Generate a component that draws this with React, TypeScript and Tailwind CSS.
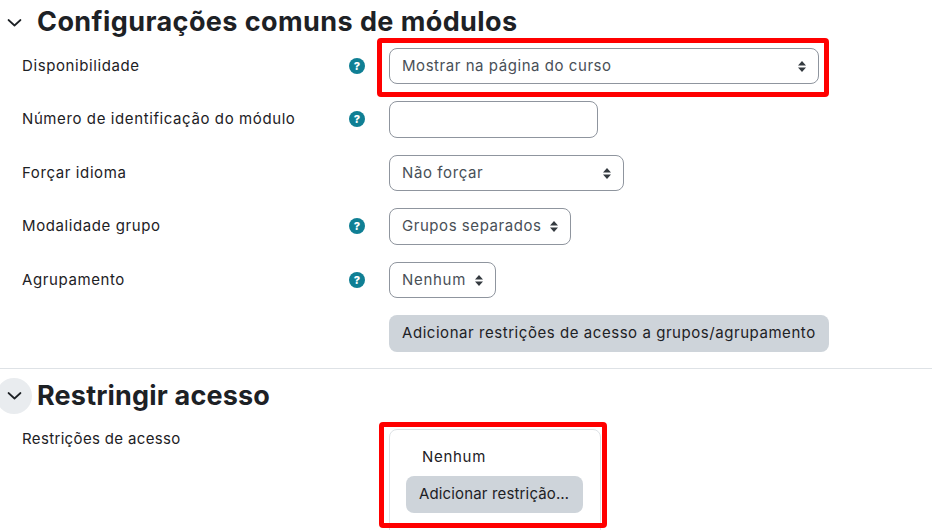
const FONT = "font-['Inter','Liberation_Sans',sans-serif]";

function Chevron() {
  return (
    <svg width="15" height="15" viewBox="0 0 15 15" fill="none" stroke="#1d2125" strokeWidth="1.7" strokeLinecap="round" strokeLinejoin="round">
      <path d="M1.5 5 L7.5 10.5 L13.5 5" />
    </svg>
  );
}

function Help() {
  return (
    <span className="flex h-4 w-4 items-center justify-center rounded-full bg-[#0f7f94] text-[11px] font-extrabold leading-none tracking-normal text-white">
      ?
    </span>
  );
}

function Caret() {
  return (
    <svg width="8" height="11" viewBox="0 0 8 11" fill="#343a40">
      <path d="M4 0 L8 4.4 H0 Z M0 6.6 H8 L4 11 Z" />
    </svg>
  );
}

function Select({ text, className }: { text: string; className: string }) {
  return (
    <div className={`flex items-center justify-between rounded-lg border border-[#8f959e] bg-white pl-3 pr-[12px] text-[#495057] ${className}`}>
      <span className="whitespace-nowrap">{text}</span>
      <Caret />
    </div>
  );
}

function Row({ label, help, className, children }: { label?: string; help?: boolean; className: string; children?: React.ReactNode }) {
  return (
    <div className={`flex ${className}`}>
      <div className="w-[349px] pt-[7px] pl-[22px] text-[#1d2125]">{label}</div>
      <div className="w-[40px] pt-[10px]">{help && <Help />}</div>
      <div>{children}</div>
    </div>
  );
}

export default function App() {
  return (
    <div className={`relative h-[530px] w-[932px] overflow-hidden bg-white text-[15px] tracking-[0.6px] ${FONT}`}>
      <div className="flex h-[48px] items-start pt-[4px]">
        <div className="flex h-[36px] w-[37px] items-center justify-center pr-[9px] pt-[1px]"><Chevron /></div>
        <h3 className="text-[27px] font-bold leading-[36px] tracking-[0.42px] text-[#1d2125]">Configurações comuns de módulos</h3>
      </div>

      <Row label="Disponibilidade" help className="h-[53px]">
        <Select text="Mostrar na página do curso" className="h-[36px] w-[430px] tracking-[0.55px]" />
      </Row>
      <Row label="Número de identificação do módulo" help className="h-[54px]">
        <div className="h-[37px] w-[209px] rounded-lg border border-[#8f959e] bg-white" />
      </Row>
      <Row label="Forçar idioma" className="h-[53px]">
        <Select text="Não forçar" className="h-[36px] w-[235px]" />
      </Row>
      <Row label="Modalidade grupo" help className="h-[54px]">
        <Select text="Grupos separados" className="h-[37px] w-[182px] tracking-[0.55px]" />
      </Row>
      <Row label="Agrupamento" help className="h-[53px]">
        <Select text="Nenhum" className="h-[36px] w-[107px] tracking-[0.7px]" />
      </Row>
      <Row className="h-[53px]">
        <div className="flex h-[37px] w-[440px] items-center whitespace-nowrap rounded-lg bg-[#ced4da] pl-[13px] tracking-[0.55px] text-[#1d2125]">
          Adicionar restrições de acesso a grupos/agrupamento
        </div>
      </Row>

      <div className="h-px bg-[#dee2e6]" />

      <div className="flex h-[52px] items-center pt-[1px]">
        <div className="-ml-[4px] mr-[5px] flex h-9 w-9 items-center justify-center rounded-full bg-[#e9ecef]"><Chevron /></div>
        <h3 className="text-[27px] font-bold leading-[36px] tracking-[0.18px] text-[#1d2125]">Restringir acesso</h3>
      </div>

      <div className="mt-[8px] flex">
        <div className="-mt-[1px] w-[389px] pl-[22px] tracking-[0.35px] text-[#1d2125]">Restrições de acesso</div>
        <div className="h-[120px] w-[212px] rounded-lg border border-[#dee2e6] px-4 pt-[15px]">
          <div className="pl-4 leading-[24px] tracking-[0.7px] text-[#1d2125]">Nenhum</div>
          <div className="mt-[7px] flex h-[37px] w-[177px] items-center whitespace-nowrap rounded-lg bg-[#ced4da] pl-[13px] tracking-[0.15px] text-[#1d2125]">
            Adicionar restrição…
          </div>
        </div>
      </div>

      <div className="absolute left-[377px] top-[38px] h-[59px] w-[452px] rounded-sm border-[5px] border-[#ff0000]" />
      <div className="absolute left-[379px] top-[422px] h-[106px] w-[228px] rounded-sm border-[5px] border-[#ff0000]" />
    </div>
  );
}
